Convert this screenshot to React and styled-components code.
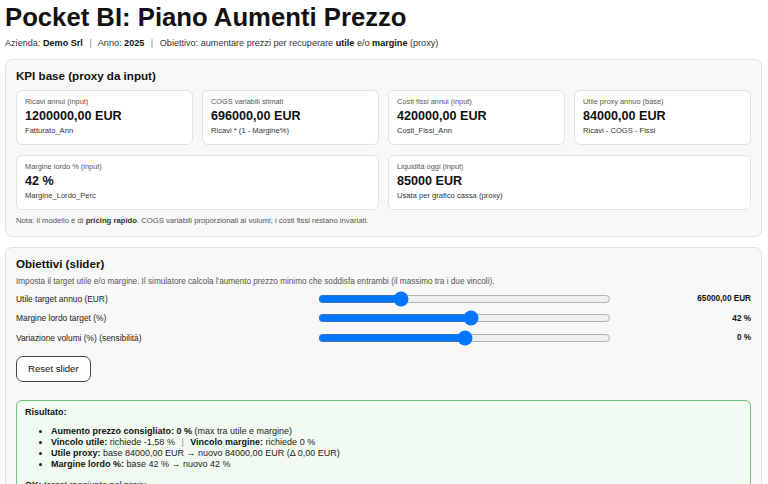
import React, { useState } from 'react'
import styled, { createGlobalStyle } from 'styled-components'

const GlobalStyle = createGlobalStyle`
  body {
    margin: 0;
    background: #fff;
    color: #111;
    font-family: 'Liberation Sans', Arial, sans-serif;
  }
`

const kpis = [
  { label: 'Ricavi annui (input)', value: '1200000,00 EUR', sub: 'Fatturato_Ann' },
  { label: 'COGS variabili stimati', value: '696000,00 EUR', sub: 'Ricavi * (1 - Margine%)' },
  { label: 'Costi fissi annui (input)', value: '420000,00 EUR', sub: 'Costi_Fissi_Ann' },
  { label: 'Utile proxy annuo (base)', value: '84000,00 EUR', sub: 'Ricavi - COGS - Fissi' },
  { label: 'Margine lordo % (input)', value: '42 %', sub: 'Margine_Lordo_Perc', wide: true },
  { label: 'Liquidità oggi (input)', value: '85000 EUR', sub: 'Usata per grafico cassa (proxy)', wide: true },
]

const defaults = { utile: 65000, margine: 42, volumi: 0 }

const App = () => {
  const [vals, setVals] = useState(defaults)
  const handleInput = (e) => {
    setVals({ ...vals, [e.target.name]: Number(e.target.value) })
  }
  const sliders = [
    { name: 'utile', label: 'Utile target annuo (EUR)', min: 0, max: 240000, step: 1000, text: `${vals.utile},00 EUR` },
    { name: 'margine', label: 'Margine lordo target (%)', min: 0, max: 80, step: 1, text: `${vals.margine} %` },
    { name: 'volumi', label: 'Variazione volumi (%) (sensibilità)', min: -50, max: 50, step: 1, text: `${vals.volumi} %` },
  ]
  return (
    <Page>
      <GlobalStyle />
      <Title>Pocket BI: Piano Aumenti Prezzo</Title>
      <Meta>
        Azienda: <b>Demo Srl</b> <Sep>|</Sep> Anno: <b>2025</b> <Sep>|</Sep> Obiettivo: aumentare
        prezzi per recuperare <b>utile</b> e/o <b>margine</b> (proxy)
      </Meta>

      <Panel>
        <PanelTitle>KPI base (proxy da input)</PanelTitle>
        <KpiGrid>
          {kpis.map((k) => (
            <Card key={k.label} $wide={k.wide}>
              <CardLabel>{k.label}</CardLabel>
              <CardValue>{k.value}</CardValue>
              <CardSub>{k.sub}</CardSub>
            </Card>
          ))}
        </KpiGrid>
        <Note>
          Nota: il modello è di <b>pricing rapido</b>. COGS variabili proporzionali ai volumi; i costi
          fissi restano invariati.
        </Note>
      </Panel>

      <Panel>
        <PanelTitle>Obiettivi (slider)</PanelTitle>
        <Desc>
          Imposta il target utile e/o margine. Il simulatore calcola l'aumento prezzo minimo che
          soddisfa entrambi (il massimo tra i due vincoli).
        </Desc>
        <SliderList>
          {sliders.map((s) => (
            <SliderRow key={s.name}>
              <SliderLabel>{s.label}</SliderLabel>
              <Range
                type='range'
                name={s.name}
                min={s.min}
                max={s.max}
                step={s.step}
                value={vals[s.name]}
                onChange={handleInput}
              />
              <SliderValue>{s.text}</SliderValue>
            </SliderRow>
          ))}
        </SliderList>
        <ResetButton onClick={() => setVals(defaults)}>Reset slider</ResetButton>
        <Result>
          <ResultTitle>Risultato:</ResultTitle>
          <ResultList>
            <li>
              <b>Aumento prezzo consigliato: 0 %</b> (max tra utile e margine)
            </li>
            <li>
              <b>Vincolo utile:</b> richiede -1,58 % <Sep>|</Sep> <b>Vincolo margine:</b> richiede 0 %
            </li>
            <li>
              <b>Utile proxy:</b> base 84000,00 EUR → nuovo 84000,00 EUR (Δ 0,00 EUR)
            </li>
            <li>
              <b>Margine lordo %:</b> base 42 % → nuovo 42 %
            </li>
          </ResultList>
          <ResultNote>
            <b>OK:</b> target raggiunto nel proxy.
          </ResultNote>
        </Result>
      </Panel>
    </Page>
  )
}

const Page = styled.div`
  padding: 0 6px 0 5px;
`
const Title = styled.h1`
  margin: 0;
  padding-top: 2px;
  font-size: 25.7px;
  line-height: 30px;
  font-weight: 700;
  color: #111;
`
const Meta = styled.div`
  margin: 4px 0 9px;
  font-size: 9.1px;
  line-height: 14px;
  color: #333;
  b {
    color: #111;
  }
`
const Sep = styled.span`
  color: #888;
  margin: 0 4px;
`
const Panel = styled.section`
  background: #f8f8f8;
  border: 1px solid #e2e2e2;
  border-radius: 7px;
  padding: 8px 10px 9px;
  margin-bottom: 10px;
`
const PanelTitle = styled.h2`
  margin: 0 0 7px;
  font-size: 11.6px;
  line-height: 15px;
  font-weight: 700;
`
const KpiGrid = styled.div`
  display: grid;
  grid-template-columns: repeat(4, 1fr);
  gap: 10px 9px;
`
const Card = styled.div`
  grid-column: ${(p) => (p.$wide ? 'span 2' : 'span 1')};
  background: #fff;
  border: 1px solid #e2e2e2;
  border-radius: 6px;
  padding: 5px 8px 7px;
`
const CardLabel = styled.div`
  font-size: 7.4px;
  line-height: 11px;
  color: #555;
`
const CardValue = styled.div`
  font-size: 12.6px;
  line-height: 18px;
  font-weight: 700;
  color: #111;
`
const CardSub = styled.div`
  font-size: 7.6px;
  line-height: 12px;
  color: #333;
`
const Note = styled.div`
  margin-top: 5px;
  font-size: 7.7px;
  line-height: 12px;
  color: #555;
  b {
    color: #333;
  }
`
const Desc = styled.div`
  font-size: 8.2px;
  line-height: 12px;
  color: #555;
  margin-top: -2px;
`
const SliderList = styled.div`
  display: flex;
  flex-direction: column;
  margin-top: 1px;
`
const SliderRow = styled.div`
  display: grid;
  grid-template-columns: 292px 1fr 130px;
  gap: 10px;
  align-items: center;
  height: 19.5px;
`
const SliderLabel = styled.div`
  font-size: 8.4px;
  color: #222;
`
const Range = styled.input`
  margin: 0;
  width: 100%;
  accent-color: #0075ff;
`
const SliderValue = styled.div`
  text-align: right;
  font-size: 8.2px;
  font-weight: 700;
  color: #111;
`
const ResetButton = styled.button`
  display: block;
  margin-top: 8px;
  height: 26px;
  padding: 0 11px;
  background: #fff;
  border: 1px solid #444;
  border-radius: 7px;
  font-family: 'Liberation Sans', Arial, sans-serif;
  font-size: 9.6px;
  color: #111;
  cursor: pointer;
`
const Result = styled.div`
  margin-top: 18px;
  background: #f2fbf1;
  border: 1px solid #78be78;
  border-radius: 6px;
  padding: 5px 8px;
`
const ResultTitle = styled.div`
  font-size: 9px;
  line-height: 13px;
  font-weight: 700;
`
const ResultList = styled.ul`
  margin: 7px 0 0;
  padding-left: 26px;
  font-size: 9px;
  line-height: 11px;
  color: #222;
  b {
    color: #111;
  }
`
const ResultNote = styled.div`
  margin-top: 9px;
  font-size: 9px;
  line-height: 12px;
`

export default App
